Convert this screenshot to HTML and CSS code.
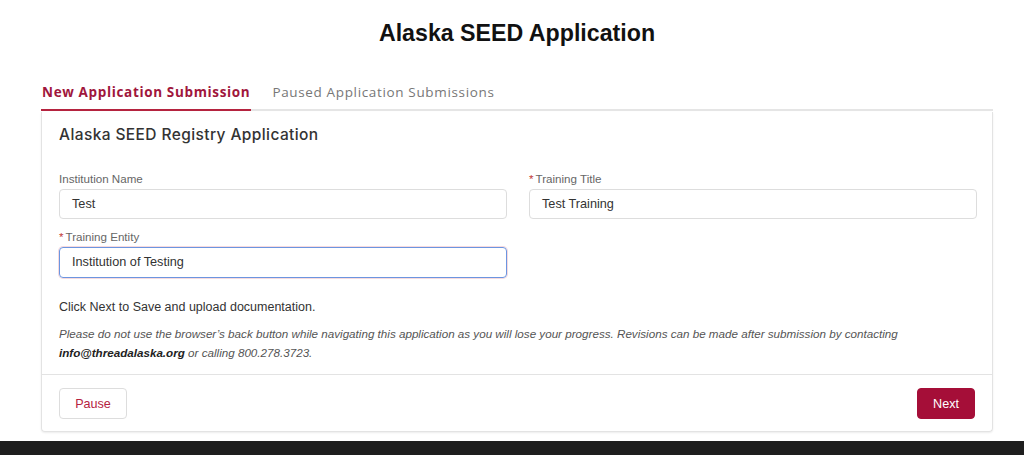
FILE: index.html
```html
<!DOCTYPE html>
<html>
<head>
<meta charset="utf-8">
<link rel="stylesheet" href="styles.css">
</head>
<body>
<div class="page">
  <h1 class="title">Alaska SEED Application</h1>
  <div class="tabs">
    <div class="tab active">New Application Submission</div>
    <div class="tab">Paused Application Submissions</div>
  </div>
  <div class="card">
    <div class="card-body">
      <h2 class="card-title">Alaska SEED Registry Application</h2>
      <div class="grid">
        <div class="field">
          <label class="label">Institution Name</label>
          <div class="input">Test</div>
        </div>
        <div class="field">
          <label class="label"><span class="req">*</span>Training Title</label>
          <div class="input">Test Training</div>
        </div>
        <div class="field">
          <label class="label"><span class="req">*</span>Training Entity</label>
          <div class="input focus">Institution of Testing</div>
        </div>
      </div>
      <p class="note">Click Next to Save and upload documentation.</p>
      <p class="warn">Please do not use the browser’s back button while navigating this application as you will lose your progress. Revisions can be made after submission by contacting <b>info@threadalaska.org</b> or calling 800.278.3723.</p>
    </div>
    <div class="card-footer">
      <button class="btn btn-pause">Pause</button>
      <button class="btn btn-next">Next</button>
    </div>
  </div>
</div>
<div class="bottom-bar"></div>
</body>
</html>
```
FILE: styles.css
```css
* { box-sizing: border-box; }
html, body { margin: 0; padding: 0; background: #fff; }
body { font-family: "Liberation Sans", Arial, sans-serif; color: #333; height: 455px; overflow: hidden; display: flex; flex-direction: column; }
.page { width: 952px; margin-left: 41px; flex: 1; }
.title { margin: 18px 0 0; height: 30px; line-height: 30px; text-align: center; font-size: 23.2px; font-weight: bold; color: #111; }
.tabs { display: flex; gap: 20px; margin-top: 30px; border-bottom: 2px solid #e5e5e5; }
.tab { font-family: "Open Sans", sans-serif; font-size: 13.5px; letter-spacing: 0.65px; line-height: 20px; padding: 4px 1px 7px; color: #777; margin-bottom: -2px; border-bottom: 2px solid transparent; }
.tab.active { color: #a0163c; font-weight: 700; border-bottom-color: #b5233f; }
.card { border: 1px solid #e3e3e3; border-top: none; border-radius: 0 0 4px 4px; box-shadow: 0 1px 2px rgba(0,0,0,0.08); margin-top: 1px; }
.card-body { padding: 13px 17px 12px; }
.card-title { margin: 0; font-family: "Inter", "Open Sans", sans-serif; font-weight: 500; font-size: 15.5px; line-height: 20px; color: #333; letter-spacing: 0.4px; }
.grid { display: grid; grid-template-columns: 448px 448px; column-gap: 22px; row-gap: 11px; margin-top: 27px; }
.field { display: flex; flex-direction: column; gap: 3px; }
.label { font-size: 11.6px; line-height: 14px; color: #666; }
.req { color: #c23934; margin-right: 2px; }
.input { height: 30px; border: 1px solid #ddd; border-radius: 4px; padding: 0 12px; font-size: 12.7px; line-height: 28px; color: #333; }
.input.focus { height: 31px; border-color: #6c95e0; box-shadow: 0 0 0 1px rgba(230,150,160,0.35); }
.note { margin: 20px 0 0; font-size: 12.5px; line-height: 18px; color: #333; }
.warn { margin: 8px 0 0; font-size: 11.65px; line-height: 19px; font-style: italic; color: #555; }
.warn b { color: #222; }
.card-footer { border-top: 1px solid #e3e3e3; display: flex; justify-content: space-between; padding: 13px 17px 12px; }
.btn { height: 31px; border-radius: 4px; font-family: "Liberation Sans", Arial, sans-serif; font-size: 12.6px; padding: 0; }
.btn-pause { background: #fff; border: 1px solid #ddd; color: #b5233f; width: 68px; }
.btn-next { background: #a50e38; border: 1px solid #a50e38; color: #fff; width: 58px; }
.bottom-bar { height: 14px; background: #1e1e1e; }
```
